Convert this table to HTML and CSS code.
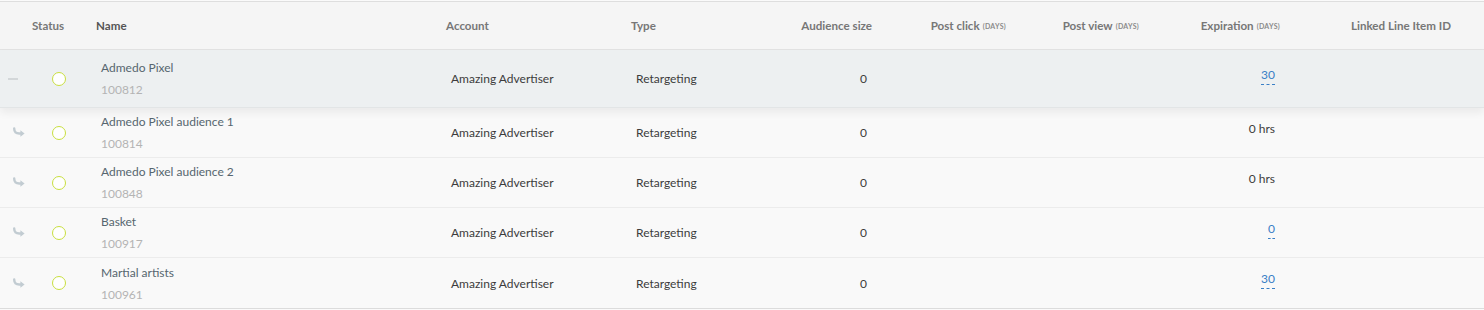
FILE: index.html
```html
<!DOCTYPE html>
<html lang="en">
<head>
  <meta charset="UTF-8">
  <title>Audiences</title>
  <link rel="stylesheet" href="styles.css">
</head>
<body>
<div class="table">
  <div class="row head">
    <div class="cell"></div>
    <div class="cell">Status</div>
    <div class="cell sorted">Name</div>
    <div class="cell">Account</div>
    <div class="cell">Type</div>
    <div class="cell num">Audience size</div>
    <div class="cell num">Post click <small>(days)</small></div>
    <div class="cell num">Post view <small>(days)</small></div>
    <div class="cell num">Expiration <small>(days)</small></div>
    <div class="cell num">Linked Line Item ID</div>
    <div class="cell"></div>
  </div>

  <!-- parent row -->
  <div class="row parent">
    <div class="cell toggle"><span class="dash"></span></div>
    <div class="cell status"><span class="dot"></span></div>
    <div class="cell name"><span class="title">Admedo Pixel</span><span class="id">100812</span></div>
    <div class="cell">Amazing Advertiser</div>
    <div class="cell">Retargeting</div>
    <div class="cell num">0</div>
    <div class="cell num"></div>
    <div class="cell num"></div>
    <div class="cell num"><a class="edit">30</a></div>
    <div class="cell num"></div>
    <div class="cell"></div>
  </div>

  <div class="row">
    <div class="cell toggle"><svg class="child" viewBox="0 0 14 11"><path d="M2.2 1.5c0 3.6 1.8 5 5 5H9" /><path class="head-fill" d="M8.4 3.2l4.2 3.3-4.2 3.3z" /></svg></div>
    <div class="cell status"><span class="dot"></span></div>
    <div class="cell name"><span class="title">Admedo Pixel audience 1</span><span class="id">100814</span></div>
    <div class="cell">Amazing Advertiser</div>
    <div class="cell">Retargeting</div>
    <div class="cell num">0</div>
    <div class="cell num"></div>
    <div class="cell num"></div>
    <div class="cell num top">0 hrs</div>
    <div class="cell num"></div>
    <div class="cell"></div>
  </div>

  <div class="row">
    <div class="cell toggle"><svg class="child" viewBox="0 0 14 11"><path d="M2.2 1.5c0 3.6 1.8 5 5 5H9" /><path class="head-fill" d="M8.4 3.2l4.2 3.3-4.2 3.3z" /></svg></div>
    <div class="cell status"><span class="dot"></span></div>
    <div class="cell name"><span class="title">Admedo Pixel audience 2</span><span class="id">100848</span></div>
    <div class="cell">Amazing Advertiser</div>
    <div class="cell">Retargeting</div>
    <div class="cell num">0</div>
    <div class="cell num"></div>
    <div class="cell num"></div>
    <div class="cell num top">0 hrs</div>
    <div class="cell num"></div>
    <div class="cell"></div>
  </div>

  <div class="row">
    <div class="cell toggle"><svg class="child" viewBox="0 0 14 11"><path d="M2.2 1.5c0 3.6 1.8 5 5 5H9" /><path class="head-fill" d="M8.4 3.2l4.2 3.3-4.2 3.3z" /></svg></div>
    <div class="cell status"><span class="dot"></span></div>
    <div class="cell name"><span class="title">Basket</span><span class="id">100917</span></div>
    <div class="cell">Amazing Advertiser</div>
    <div class="cell">Retargeting</div>
    <div class="cell num">0</div>
    <div class="cell num"></div>
    <div class="cell num"></div>
    <div class="cell num"><a class="edit">0</a></div>
    <div class="cell num"></div>
    <div class="cell"></div>
  </div>

  <div class="row">
    <div class="cell toggle"><svg class="child" viewBox="0 0 14 11"><path d="M2.2 1.5c0 3.6 1.8 5 5 5H9" /><path class="head-fill" d="M8.4 3.2l4.2 3.3-4.2 3.3z" /></svg></div>
    <div class="cell status"><span class="dot"></span></div>
    <div class="cell name"><span class="title">Martial artists</span><span class="id">100961</span></div>
    <div class="cell">Amazing Advertiser</div>
    <div class="cell">Retargeting</div>
    <div class="cell num">0</div>
    <div class="cell num"></div>
    <div class="cell num"></div>
    <div class="cell num"><a class="edit">30</a></div>
    <div class="cell num"></div>
    <div class="cell"></div>
  </div>
</div>
</body>
</html>
```

FILE: styles.css
```css
body {
  margin: 0;
  background-color: #fafafa;
  font-family: 'Lato', 'Open Sans', sans-serif;
  font-size: 12px;
  color: #3c3c3c;
}
.table {
  margin-top: 1px;
  border-top: 1px solid #dedede;
  border-bottom: 1px solid #dcdcdc;
  background-color: #f9f9f9;
}
.row {
  display: grid;
  grid-template-columns: 27px 64px 350px 185px 114px 137px 134px 133px 141px 171px 28px;
  height: 50px;
  border-bottom: 1px solid #ececec;
  box-sizing: border-box;
}
.row:last-child {
  border-bottom: none;
  height: 50px;
}
.cell {
  display: flex;
  align-items: center;
  padding: 0 10px;
  white-space: nowrap;
  min-width: 0;
}
.cell.num {
  justify-content: flex-end;
}
.cell.top {
  align-items: flex-start;
  padding-top: 13px;
}
/* header */
.head {
  height: 48px;
  background-color: #f5f5f5;
  border-bottom: 1px solid #e2e2e2;
  font-size: 11.6px;
  font-weight: 700;
  color: #777;
}
.head .cell {
  padding: 0 5px;
}
.head .cell.sorted {
  color: #555;
}
.head small {
  font-size: 7px;
  text-transform: uppercase;
  margin-left: 3px;
  letter-spacing: 0.3px;
  color: #8a8a8a;
}
/* rows */
.parent {
  height: 58px;
  background-color: #edf0f1;
  border-bottom: 1px solid #e2e5e6;
  position: relative;
  box-shadow: 0 5px 8px rgba(0, 0, 0, 0.06);
}
.toggle {
  padding: 0 0 0 12px;
}
.dash {
  width: 10px;
  height: 2px;
  margin-left: -4px;
  background-color: #d3d7d9;
}
.child {
  width: 14px;
  height: 11px;
}
.child path {
  fill: none;
  stroke: #c2ccd2;
  stroke-width: 2.4;
  stroke-linecap: round;
}
.child .head-fill {
  fill: #c2ccd2;
  stroke: none;
}
.status {
  justify-content: center;
  padding: 0;
}
.dot {
  width: 12px;
  height: 12px;
  border: 1.5px solid #c9df3f;
  border-radius: 50%;
  background-color: #fff;
}
.name {
  flex-direction: column;
  align-items: flex-start;
  justify-content: center;
  gap: 7px;
}
.name .title {
  color: #56666f;
  font-size: 12px;
}
.name .id {
  color: #b4b4b4;
  font-size: 12px;
}
.edit {
  color: #3a7fc6;
  border-bottom: 1px dashed #3a7fc6;
  padding-bottom: 2px;
  margin-top: -6px;
  cursor: pointer;
}
```
